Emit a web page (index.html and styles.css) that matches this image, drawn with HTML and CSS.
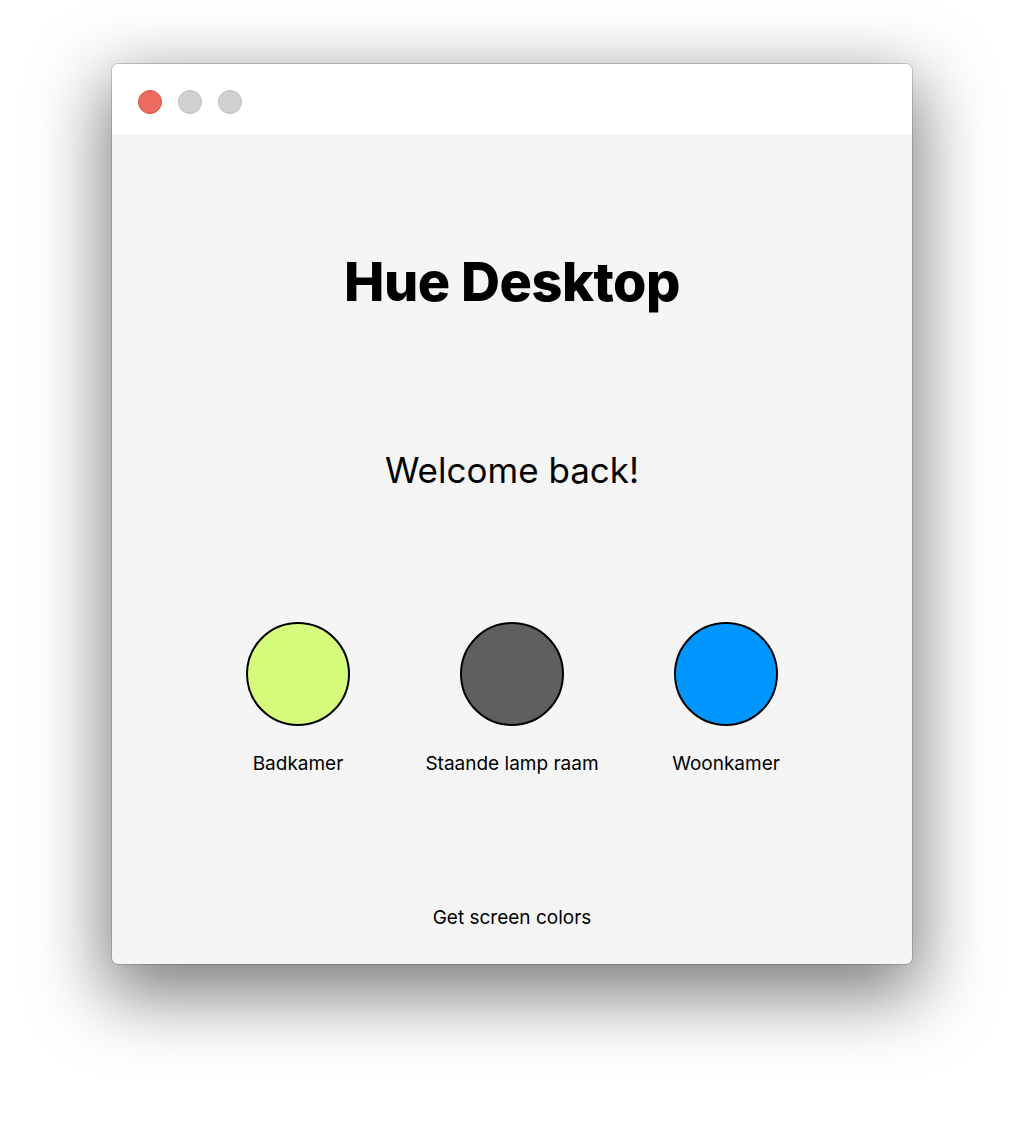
FILE: index.html
```html
<!DOCTYPE html>
<html>
<head>
<meta charset="utf-8">
<link rel="stylesheet" href="styles.css">
</head>
<body>
<div class="window">
  <div class="titlebar">
    <span class="light close"></span>
    <span class="light"></span>
    <span class="light"></span>
  </div>
  <div class="content">
    <h1 class="title">Hue Desktop</h1>
    <p class="welcome">Welcome back!</p>
    <div class="lamps">
      <div class="lamp">
        <div class="bulb bulb-yellow"></div>
        <div class="lamp-name">Badkamer</div>
      </div>
      <div class="lamp">
        <div class="bulb bulb-grey"></div>
        <div class="lamp-name">Staande lamp raam</div>
      </div>
      <div class="lamp">
        <div class="bulb bulb-blue"></div>
        <div class="lamp-name">Woonkamer</div>
      </div>
    </div>
    <div class="action">Get screen colors</div>
  </div>
</div>
</body>
</html>
```

FILE: styles.css
```css
html, body {
  margin: 0;
  padding: 0;
  background: #ffffff;
}
body {
  box-sizing: border-box;
  min-height: 1124px;
  padding-top: 64px;
  font-family: Inter, "Noto Sans", sans-serif;
  color: #000;
}
.window {
  width: 800px;
  height: 900px;
  margin: 0 auto;
  border-radius: 6px;
  overflow: hidden;
  background: #f5f5f5;
  box-shadow: 0 0 0 1px rgba(0,0,0,0.16), 0 24px 70px 8px rgba(0,0,0,0.5);
  display: flex;
  flex-direction: column;
}
.titlebar {
  height: 70px;
  background: #ffffff;
  display: flex;
  align-items: center;
  gap: 16px;
  padding-left: 26px;
  padding-top: 6px;
  box-sizing: border-box;
  flex: none;
}
.light {
  width: 22px;
  height: 22px;
  border-radius: 50%;
  background: #d1d1d1;
  border: 1px solid #bdbdbd;
}
.light.close {
  background: #ee6b60;
  border-color: #d85148;
}
.content {
  flex: 1;
  display: flex;
  flex-direction: column;
  align-items: center;
}
.title {
  margin: 113px 0 0;
  font-size: 54px;
  font-weight: 800;
  letter-spacing: -0.5px;
  line-height: 70px;
}
.welcome {
  margin: 128px 0 0;
  font-size: 35px;
  font-weight: 400;
  line-height: 50px;
}
.lamps {
  margin-top: 127px;
  display: flex;
}
.lamp {
  width: 214px;
  display: flex;
  flex-direction: column;
  align-items: center;
}
.bulb {
  width: 100px;
  height: 100px;
  border-radius: 50%;
  border: 2px solid #000;
}
.bulb-yellow { background: #d5fc7a; }
.bulb-grey { background: #5f5f5f; }
.bulb-blue { background: #0096ff; }
.lamp-name {
  margin-top: 26px;
  font-size: 19px;
  line-height: 24px;
}
.action {
  margin-top: 130px;
  font-size: 19px;
  line-height: 24px;
}
```
